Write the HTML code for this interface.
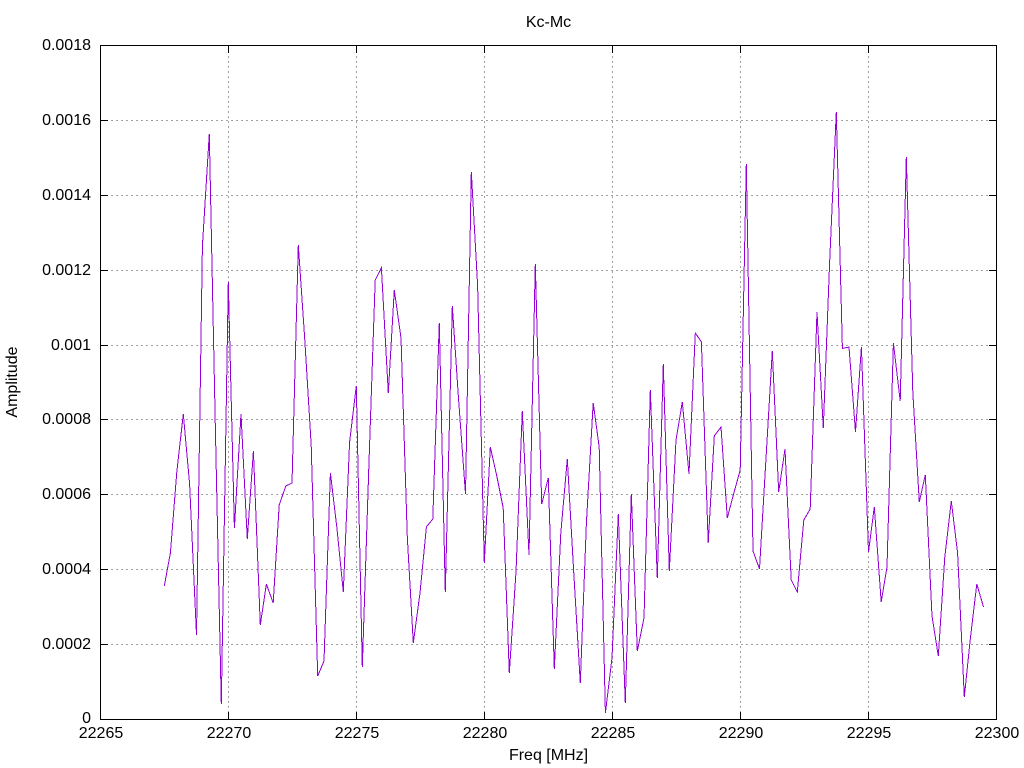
<!DOCTYPE html>
<html><head><meta charset="utf-8"><title>Kc-Mc</title>
<style>
html,body{margin:0;padding:0;background:#fff;width:1024px;height:768px;overflow:hidden}
svg{display:block}
text{font-family:"Liberation Sans",sans-serif;font-size:16px;fill:#000}
</style></head><body>
<svg width="1024" height="768" viewBox="0 0 1024 768" xmlns="http://www.w3.org/2000/svg">
<rect width="1024" height="768" fill="#fff"/>
<g stroke="#a0a0a0" stroke-width="1" stroke-dasharray="2 3" fill="none" shape-rendering="crispEdges">
<path d="M101 120.5H996M101 195.5H996M101 270.5H996M101 345.5H996M101 419.5H996M101 494.5H996M101 569.5H996M101 644.5H996"/>
<path d="M228.500 46V719M356.500 46V719M484.500 46V719M612.500 46V719M740.500 46V719M868.500 46V719"/>
</g>
<g stroke="#000" stroke-width="1" fill="none" shape-rendering="crispEdges">
<path d="M100.500 45.500H996.500V719.500H100.500Z"/>
<path d="M101 120.500H108M101 195.500H108M101 270.500H108M101 345.500H108M101 419.500H108M101 494.500H108M101 569.500H108M101 644.500H108"/>
<path d="M996 120.500H989M996 195.500H989M996 270.500H989M996 345.500H989M996 419.500H989M996 494.500H989M996 569.500H989M996 644.500H989"/>
<path d="M228.500 719V712M356.500 719V712M484.500 719V712M612.500 719V712M740.500 719V712M868.500 719V712"/>
<path d="M228.500 46V53M356.500 46V53M484.500 46V53M612.500 46V53M740.500 46V53M868.500 46V53"/>
</g>
<polyline fill="none" stroke="#9400d3" stroke-width="1" stroke-linejoin="miter" shape-rendering="crispEdges" points="164.3,586 170.4,553 176.8,472 183.3,414 189.6,484 196.5,635 202.4,246 209.3,134 215.2,420 221.3,704 228.3,282 234.4,528 241,414 247.3,539 253.4,451 260.3,625 266.4,584 273.2,603 279.2,505 285.8,486 292,483 298.3,245 304.8,340 311.2,445 317.7,676 324,661 330.4,473 336.8,527 343.3,592 349.6,442 356.3,386 362.3,667 368.8,468 375.2,280 381.4,268 388.3,393 394.3,290 401,338 407.3,537 413.3,643 420,593 426.4,527 432.8,519 439.3,323 445.3,592 452.3,306 458.4,397 465.5,494 471.3,172 477.6,285 484.3,563 490.3,447 496.8,476 503.2,508 509.3,673 516,572 522.3,411 529,555 535.3,264 541.7,504 548.3,478 554.3,669 560.8,533 567.3,459 573.6,570 580.3,683 586.4,523 593.2,403 599.2,447 605.4,713 612,658 618.3,514 625.3,703 631.3,494 637.3,651 644,618 650.3,390 657.3,578 663.3,364 669.3,571 676,440 682.3,402 689,474 695.3,333 701.4,342 708.2,543 714.3,436 721,427 727.3,518 733.6,494 740.2,470 746.3,164 753,551 759.5,569 765.6,465 772.3,351 778.7,492 785,449 791.2,580 797.3,592 803.8,520 810.2,509 817,312 823.3,428 829.6,263 836.3,112 842.4,348.5 849,347 855.5,432 861.4,347 868.5,552 874.3,507 881.2,602 887,567 893.4,343 900.2,401 906.3,157 912.8,392 919.3,502 925.3,475 932,616 938.3,656 944.8,557 951.3,501 957.6,553 964.3,697 970.4,638 976.8,584 983.5,607"/>
<g text-anchor="end">
<text x="91" y="723">0</text>
<text x="91" y="649">0.0002</text>
<text x="91" y="574">0.0004</text>
<text x="91" y="499">0.0006</text>
<text x="91" y="424">0.0008</text>
<text x="91" y="350">0.001</text>
<text x="91" y="275">0.0012</text>
<text x="91" y="200">0.0014</text>
<text x="91" y="125">0.0016</text>
<text x="91" y="50">0.0018</text>
</g>
<g text-anchor="middle">
<text x="101" y="738">22265</text>
<text x="229" y="738">22270</text>
<text x="357" y="738">22275</text>
<text x="485" y="738">22280</text>
<text x="613" y="738">22285</text>
<text x="741" y="738">22290</text>
<text x="869" y="738">22295</text>
<text x="997" y="738">22300</text>
<text x="548.500" y="760">Freq [MHz]</text>
<text x="548.500" y="27">Kc-Mc</text>
<text transform="translate(17,382) rotate(-90)">Amplitude</text>
</g>
</svg>
</body></html>
